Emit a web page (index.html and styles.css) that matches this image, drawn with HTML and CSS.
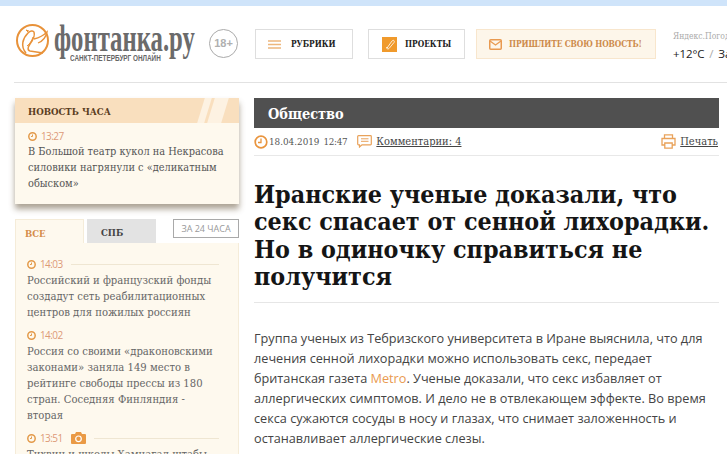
FILE: index.html
```html
<!DOCTYPE html>
<html lang="ru">
<head>
<meta charset="utf-8">
<title>Фонтанка.ру</title>
<link rel="stylesheet" href="styles.css">
</head>
<body>
<div class="topstrip"></div>
<div class="page">
  <header class="header">
    <a class="logo">
      <svg class="logo-mark" viewBox="0 0 36 36" width="36" height="36">
        <circle cx="17.500" cy="17.500" r="15.500" fill="none" stroke="#e8923a" stroke-width="2"/>
        <path d="M11 30C5 23 8 15 13 10c2-2 5-3 6-1 1 3-1 8-4 12-2 3-3 6 0 7l13 2" fill="none" stroke="#e8923a" stroke-width="1.500"/>
        <path d="M19 16c4-1 9-3 13-7-1 5-4 9-9 11" fill="none" stroke="#e8923a" stroke-width="1.300"/>
        <path d="M14 8l-3-1 3 3M12 23c3-2 5-6 6-9" fill="none" stroke="#e8923a" stroke-width="1"/>
      </svg>
      <div class="logo-text">
        <div class="logo-name">фонтанка.ру</div>
        <div class="logo-sub">САНКТ-ПЕТЕРБУРГ ОНЛАЙН</div>
      </div>
    </a>
    <div class="age">18+</div>
    <a class="btn btn-rubrics">
      <svg class="ico" viewBox="0 0 13 9" width="13" height="9"><path d="M0 1h13M0 4.500h13M0 8h13" stroke="#edb77d" stroke-width="1.500"/></svg>
      <span>РУБРИКИ</span>
    </a>
    <a class="btn btn-projects">
      <svg class="ico" viewBox="0 0 15 15" width="15" height="15"><rect width="15" height="15" fill="#f09a2c"/><path d="M5 11l5-7c1.500-1.500 3 0 2 1.500l-5 6c-1 1-3 .5-2-1.500z" fill="none" stroke="#fff" stroke-width=".8"/></svg>
      <span>ПРОЕКТЫ</span>
    </a>
    <a class="btn btn-send">
      <svg class="ico" viewBox="0 0 13 11" width="13" height="11"><rect x=".75" y=".75" width="11.500" height="9.500" rx="1" fill="none" stroke="#e99a50" stroke-width="1.500"/><path d="M1 2l5.500 4L12 2" fill="none" stroke="#e99a50" stroke-width="1.300"/></svg>
      <span>ПРИШЛИТЕ СВОЮ НОВОСТЬ!</span>
    </a>
    <div class="weather">
      <div class="weather-src">Яндекс.Погода</div>
      <div class="weather-val">+12°C <i>/</i> Завтра</div>
    </div>
  </header>

  <div class="columns">
    <aside class="side">
      <section class="hour">
        <div class="hour-head">
          <span>НОВОСТЬ ЧАСА</span>
          <b class="slash"></b><b class="slash"></b>
        </div>
        <div class="hour-body">
          <div class="time"><svg class="clock" viewBox="0 0 9 9" width="9" height="9"><circle cx="4.500" cy="4.500" r="3.700" fill="none" stroke="#e39a4a" stroke-width="1.500"/><path d="M4.500 2.500v2h-1.500" fill="none" stroke="#e39a4a"/></svg>13:27</div>
          <p class="news">В Большой театр кукол на Некрасова силовики нагрянули с «деликатным обыском»</p>
        </div>
      </section>

      <div class="tabs">
        <a class="tab tab-on">ВСЕ</a>
        <a class="tab tab-off">СПБ</a>
        <a class="tab-24">ЗА 24 ЧАСА</a>
      </div>
      <section class="feed">
        <div class="time"><svg class="clock" viewBox="0 0 9 9" width="9" height="9"><circle cx="4.500" cy="4.500" r="3.700" fill="none" stroke="#e39a4a" stroke-width="1.500"/><path d="M4.500 2.500v2h-1.500" fill="none" stroke="#e39a4a"/></svg>14:03<span class="rule"></span></div>
        <p class="news">Российский и французский фонды создадут сеть реабилитационных центров для пожилых россиян</p>
        <div class="time"><svg class="clock" viewBox="0 0 9 9" width="9" height="9"><circle cx="4.500" cy="4.500" r="3.700" fill="none" stroke="#e39a4a" stroke-width="1.500"/><path d="M4.500 2.500v2h-1.500" fill="none" stroke="#e39a4a"/></svg>14:02</div>
        <p class="news">Россия со своими «драконовскими законами» заняла 149 место в рейтинге свободы прессы из 180 стран. Соседняя Финляндия - вторая</p>
        <div class="time"><svg class="clock" viewBox="0 0 9 9" width="9" height="9"><circle cx="4.500" cy="4.500" r="3.700" fill="none" stroke="#e39a4a" stroke-width="1.500"/><path d="M4.500 2.500v2h-1.500" fill="none" stroke="#e39a4a"/></svg>13:51
          <svg class="cam" viewBox="0 0 15 12" width="15" height="12"><path d="M0 3a1 1 0 0 1 1-1h3l1-2h5l1 2h3a1 1 0 0 1 1 1v8a1 1 0 0 1-1 1H1a1 1 0 0 1-1-1z" fill="#ea9a45"/><circle cx="7.500" cy="6.800" r="2.800" fill="none" stroke="#fff" stroke-width="1.200"/></svg>
          <span class="rule"></span></div>
        <p class="news">Тихвин и школы Хамнагал штабы</p>
      </section>
    </aside>

    <main class="main">
      <div class="section-bar">Общество</div>
      <div class="meta">
        <svg class="m-ico" viewBox="0 0 14 14" width="14" height="14"><circle cx="7" cy="7" r="5.800" fill="none" stroke="#e9953f" stroke-width="1.700"/><path d="M7 3.500V7.500H4" fill="none" stroke="#e9953f" stroke-width="1.300"/></svg>
        <span class="date">18.04.2019</span><span class="hour-t">12:47</span>
        <svg class="m-ico m-com" viewBox="0 0 15 13" width="15" height="13"><path d="M1.500.7h12a.8.800 0 0 1 .8.800v7.500a.8.800 0 0 1-.8.800H5L2.500 12V9.800h-1a.8.800 0 0 1-.8-.800V1.500a.8.800 0 0 1 .8-.8z" fill="none" stroke="#e9a25a" stroke-width="1.200"/><path d="M4 3.800h7.500M4 6.300h7.500" stroke="#e9a25a"/></svg>
        <a class="link">Комментарии: 4</a>
        <span class="spacer"></span>
        <svg class="m-ico" viewBox="0 0 15 15" width="15" height="15"><path d="M3.500 4.500V.8h8v3.700M3.500 11H1V4.500h13V11h-2.500M3.800 9h7.400v5.200H3.800z" fill="none" stroke="#e9a25a" stroke-width="1.300"/></svg>
        <a class="link">Печать</a>
      </div>
      <h1 class="title">Иранские ученые доказали, что секс спасает от сенной лихорадки. Но в одиночку справиться не получится</h1>
      <p class="lead">Группа ученых из Тебризского университета в Иране выяснила, что для лечения сенной лихорадки можно использовать секс, передает британская газета <a class="metro">Metro</a>. Ученые доказали, что секс избавляет от аллергических симптомов. И дело не в отвлекающем эффекте. Во время секса сужаются сосуды в носу и глазах, что снимает заложенность и останавливает аллергические слезы.</p>
    </main>
  </div>
</div>
</body>
</html>
```
FILE: styles.css
```css
* { box-sizing: border-box; }
html, body { margin: 0; padding: 0; height: 454px; overflow: hidden; background: #fff; }
body { font-family: "DejaVu Serif Condensed", "DejaVu Serif", serif; color: #333; width: 727px; }
a { color: inherit; }
.topstrip { height: 6px; background: #cfe4fa; }
.page { padding-left: 14px; }
.header { height: 77px; border-bottom: 1px solid #e2e2e2; display: flex; align-items: flex-start; padding-top: 23px; padding-left: 1px; white-space: nowrap; overflow: hidden; }
.logo { display: flex; width: 180px; margin-top: -7px; flex: none; }
.logo-mark { flex: none; margin-top: 1px; }
.logo-text { margin-left: 3px; }
.logo-name { font-family: "Liberation Serif", serif; font-size: 38px; line-height: 38px; color: #6b6b6b; transform: scaleX(.65); transform-origin: 0 0; height: 32px; width: 138px; margin-top: -3px; font-weight: 700; }
.logo-sub { font-family: "Liberation Sans", sans-serif; font-weight: 700; font-size: 8.500px; color: #666; margin: 3px 0 0 16px; transform: scaleX(.75); transform-origin: 0 0; line-height: 9px; width: 92px; }
.age { width: 29px; height: 29px; border: 1px solid #aaa; border-radius: 50%; font: 700 11px/27px "Liberation Sans", sans-serif; color: #b0b0b0; text-align: center; margin: 0 0 0 14px; flex: none; }
.btn { display: flex; align-items: center; height: 30px; border: 1px solid #dedede; flex: none; font-weight: 700; font-size: 8.300px; color: #222; }
.btn-rubrics { width: 98px; margin-left: 17px; padding-left: 12px; gap: 10px; }
.btn-projects { width: 97px; margin-left: 15px; padding-left: 13px; gap: 8px; }
.btn-send { width: 180px; margin-left: 11px; padding-left: 12px; gap: 7px; color: #cd8b4c; background: #fdf6ea; border-color: #f8e6cd; letter-spacing: -.1px; }
.weather { margin-left: 17px; flex: none; margin-top: 2px; }
.weather-src { font-size: 8.500px; color: #aaa; line-height: 11px; }
.weather-val { font: 400 11.500px/15px "Open Sans", sans-serif; color: #222; margin-top: 4px; letter-spacing: -.1px; }
.weather-val i { font-style: normal; color: #aaa; margin: 0 2px; }
.columns { display: flex; align-items: flex-start; padding-top: 15px; padding-left: 1px; }
.side { width: 224px; flex: none; }
.hour { box-shadow: 0 5px 6px rgba(70,50,20,.45); background: #fef9ee; height: 106px; }
.hour-head { position: relative; height: 25px; background: #f9dfbe; font-weight: 700; font-size: 9.600px; line-height: 28px; color: #5a3d1e; padding-left: 13px; overflow: hidden; }
.slash { position: absolute; top: 0; height: 25px; background: #fdf2e2; transform: skewX(-17deg); }
.slash:nth-of-type(1) { right: 31px; width: 7px; }
.slash:nth-of-type(2) { right: 14px; width: 14px; }
.hour-body { padding: 5px 13px 0; }
.time { display: flex; align-items: center; font-family: "Open Sans", sans-serif; font-size: 10px; line-height: 16px; color: #dd9a78; letter-spacing: -.6px; }
.clock { margin-right: 4px; flex: none; }
.rule { flex: 1; height: 1px; background: #efe6d2; margin-left: 8px; }
.news { margin: 0; font-size: 10.900px; line-height: 16px; color: #555; }
.tabs { display: flex; align-items: flex-end; margin-top: 15px; height: 24px; }
.tab { display: block; height: 24px; font-weight: 700; font-size: 9.500px; line-height: 27px; }
.tab-on { width: 69px; padding-left: 9px; color: #d58d4a; background: #fef9ee; border: 1px solid #f5ecd9; border-bottom: 0; }
.tab-off { width: 69px; margin-left: 3px; padding-left: 14px; color: #444; background: #e3e3e3; }
.tab-24 { width: 66px; height: 19px; margin-left: 17px; margin-bottom: 5px; border: 1px solid #a9a9a9; font: 400 9px/17px "Open Sans", sans-serif; color: #999; text-align: center; }
.feed { background: #fef9ee; border: 1px solid #f5ecd9; border-top: 0; padding: 13px 19px 0 11px; height: 260px; }
.feed .time { margin-bottom: 1px; }
.feed .news { margin-bottom: 6px; color: #666; font-size: 11.200px; }
.cam { margin-left: 8px; flex: none; }
.main { width: 465px; margin-left: 15px; flex: none; }
.section-bar { height: 30px; background: #505050; color: #fff; font-weight: 700; font-size: 14.400px; line-height: 32px; padding-left: 14px; }
.meta { display: flex; align-items: center; height: 28px; padding-right: 1px; border-bottom: 1px solid #e8e8e8; font-size: 9.800px; color: #555; overflow: hidden; }
.m-ico { flex: none; }
.date { margin-left: 1px; }
.hour-t { margin-left: 4px; letter-spacing: -.3px; }
.m-com { margin: 0 4px 0 10px; }
.link { font-size: 11px; text-decoration: underline; color: #444; }
.spacer { flex: 1; }
.meta .link:last-child { margin-left: 4px; }
.title { margin: 25px 0 0; padding-bottom: 12px; border-bottom: 1px solid #e6e6e6; font-size: 24.800px; line-height: 27.300px; font-weight: 700; color: #151515; }
.lead { margin: 25px 0 0; padding-right: 2px; font: 400 12.700px/20px "Open Sans", sans-serif; color: #444; }
.metro { color: #e99a50; }
```
